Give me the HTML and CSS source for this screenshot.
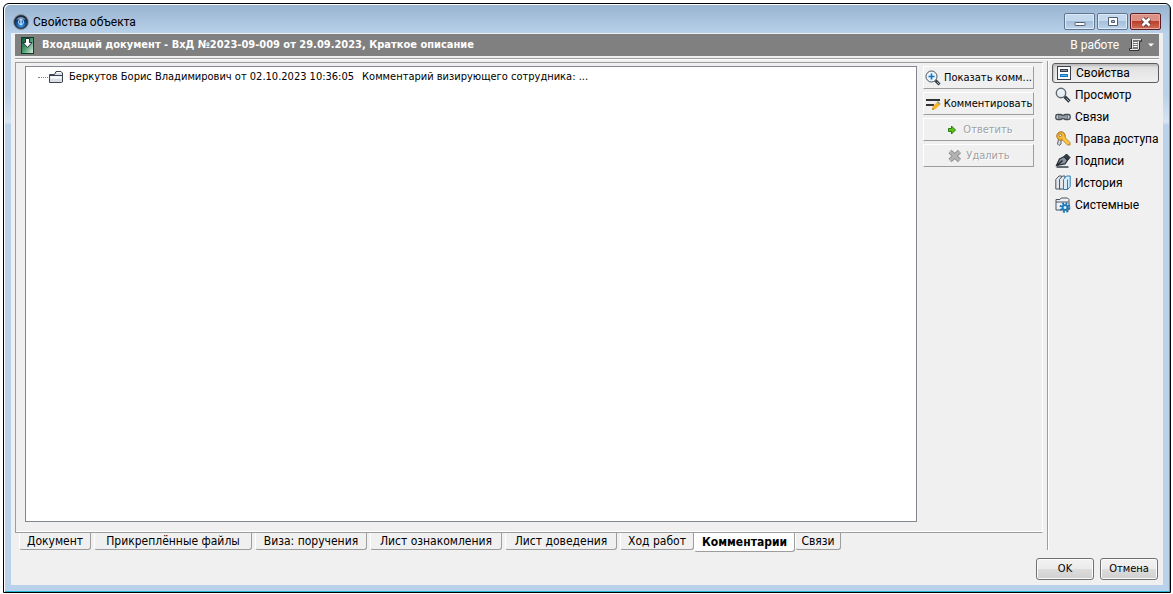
FILE: index.html
```html
<!DOCTYPE html>
<html lang="ru">
<head>
<meta charset="utf-8">
<title>Свойства объекта</title>
<link rel="stylesheet" href="styles.css">
</head>
<body>
<div class="window">
  <header class="titlebar">
    <svg class="app-icon" width="16" height="16" viewBox="0 0 16 16">
      <defs>
        <radialGradient id="orb" cx="50%" cy="75%" r="65%"><stop offset="0" stop-color="#4da0ee"/><stop offset=".6" stop-color="#12539b"/><stop offset="1" stop-color="#0b1f3e"/></radialGradient>
      </defs>
      <circle cx="8" cy="8" r="7.5" fill="#29323f" stroke="#8b98aa"/>
      <circle cx="8" cy="8" r="6" fill="url(#orb)"/>
      <path d="M3 5.500Q8 0 13 5.500" fill="#aebfd3" opacity=".7"/>
      <circle cx="8" cy="8" r="2.600" fill="none" stroke="#9fd0ff" stroke-width="1"/>
      <path d="M8 5v6" stroke="#e8f5ff" stroke-width="1.200"/>
    </svg>
    <h1 class="title">Свойства объекта</h1>
    <div class="controls">
      <button class="ctl" type="button" aria-label="Свернуть"><svg width="12" height="10" viewBox="0 0 12 10"><rect x="1" y="5.500" width="10" height="3" rx=".5" fill="#fff" stroke="#54606e"/></svg></button>
      <button class="ctl" type="button" aria-label="Развернуть"><svg width="12" height="10" viewBox="0 0 12 10"><path d="M1.500.5h9v8h-9zM4.500 3.500v2h3v-2z" fill="#fff" fill-rule="evenodd" stroke="#54606e"/></svg></button>
      <button class="ctl close" type="button" aria-label="Закрыть"><svg width="12" height="10" viewBox="0 0 12 10"><path d="M2.500 1.500l7 7M9.500 1.500l-7 7" stroke="#5b3a3c" stroke-width="4.500"/><path d="M2.500 1.500l7 7M9.500 1.500l-7 7" stroke="#fff" stroke-width="2.600"/></svg></button>
    </div>
  </header>
  <div class="client">
    <div class="docbar">
      <svg width="13" height="17" viewBox="0 0 13 17">
        <defs><linearGradient id="green" x1="0" y1="0" x2="1" y2="1"><stop offset="0" stop-color="#04552d"/><stop offset=".5" stop-color="#4c9c6c"/><stop offset="1" stop-color="#e6f3e9"/></linearGradient></defs>
        <rect x=".5" y=".5" width="12" height="16" fill="url(#green)" stroke="#0b3f24"/>
        <path d="M4.500 1.500h4v4h2.500L6.500 10.500 2 5.500h2.500z" fill="#fff" stroke="#222b4d"/>
      </svg>
      <h2 class="doc-title">Входящий документ - ВхД №2023-09-009 от 29.09.2023, Краткое описание</h2>
      <span class="state">В работе</span>
      <button class="state-menu" type="button" aria-label="Состояние">
        <svg width="26" height="14" viewBox="0 0 26 14">
          <path d="M3.500 1.500h10v2h-2v8q0 1-1.500 1H1.500v-2h2z" fill="#777" stroke="#2f343a"/>
          <path d="M4 1.500h9M4.500 2v8.500M2 11.500h8M10.500 3v8" stroke="#e8e8e8" fill="none"/>
          <path d="M5.500 4.500h4M5.500 6.500h4M5.500 8.500h4" stroke="#fff"/>
          <path d="M20 5.500h6l-3 3z" fill="#fff"/>
        </svg>
      </button>
    </div>
    <div class="main">
      <div class="left">
        <section class="page">
          <ul class="tree">
            <li class="node">
              <span class="branch"></span>
              <svg width="16" height="14" viewBox="0 0 16 14"><path d="M1.500 12V4.500h5l1.500-3h5l1.500 1.500v9l-1 .5h-12z" fill="#d9dfe5" stroke="#3b4450"/><path d="M1.500 5.500h12.500" stroke="#3b4450"/><path d="M2.500 6.500h11v2H2.500z" fill="#fff"/><path d="M9 2.500h4" stroke="#fff"/></svg>
              <span class="node-text">Беркутов Борис Владимирович от 02.10.2023 10:36:05</span>
              <span>Комментарий визирующего сотрудника: ...</span>
            </li>
          </ul>
          <div class="actions">
            <button class="action" type="button">
              <svg width="16" height="16" viewBox="0 0 16 16"><path d="M10 10l4.500 4.500" stroke="#333b44" stroke-width="3"/><path d="M12 12l2 2" stroke="#a9b3bb"/><circle cx="6.500" cy="6.500" r="5.500" fill="#eaf5fc" stroke="#4a545e"/><path d="M6.500 3.500v6M3.500 6.500h6" stroke="#1575c4" stroke-width="1.600"/></svg>
              Показать комм...</button>
            <button class="action" type="button">
              <svg width="16" height="14" viewBox="0 0 16 14"><path d="M1 3h14M1 8h8" stroke="#333" stroke-width="2"/><path d="M7 13l.8-3.500L12 5l3 3-4.500 4z" fill="#f9b529"/><path d="M12 5l1-1 2.500 2.700-.7 1.300z" fill="#8b8f96"/><path d="M7 13l.6-2.200 1.600 1.500z" fill="#a77a2b"/></svg>
              Комментировать</button>
            <button class="action" type="button" disabled>
              <svg width="16" height="12" viewBox="0 0 16 12"><path d="M4.500 4.500h3v-2.500l4 4-4 4V7.500h-3z" fill="#5cc117" stroke="#2d7b12"/></svg>
              Ответить</button>
            <button class="action" type="button" disabled>
              <svg width="16" height="14" viewBox="0 0 16 14"><path d="M3 2.500l9.500 9M12.500 2.500l-9.500 9" stroke="#929292" stroke-width="4.500"/><path d="M3 2.500l9.500 9M12.500 2.500l-9.500 9" stroke="#b4b4b4" stroke-width="2.500"/></svg>
              Удалить</button>
          </div>
        </section>
        <nav class="tabs">
          <button class="tab w72" type="button">Документ</button>
          <button class="tab w158" type="button">Прикреплённые файлы</button>
          <button class="tab w112" type="button">Виза: поручения</button>
          <button class="tab w132" type="button">Лист ознакомления</button>
          <button class="tab w112" type="button">Лист доведения</button>
          <button class="tab w74" type="button">Ход работ</button>
          <button class="tab active" type="button">Комментарии</button>
          <button class="tab last" type="button">Связи</button>
        </nav>
      </div>
      <nav class="side">
        <button class="item selected" type="button">
          <svg width="16" height="16" viewBox="0 0 16 16"><rect x="1.500" y="1.500" width="13" height="13" fill="#fafcfd" stroke="#39424c"/><rect x="4" y="4" width="8" height="3" fill="#333c46"/><path d="M5 5.500h6" stroke="#8d969e"/><rect x="4" y="9" width="8" height="3" fill="#1876bd"/><path d="M5 10.500h6" stroke="#58afe5"/></svg>
          Свойства</button>
        <button class="item" type="button">
          <svg width="16" height="16" viewBox="0 0 16 16"><path d="M9.500 9.500l5 5" stroke="#333b44" stroke-width="3.200"/><path d="M11.500 11.500l2.500 2.500" stroke="#a9b3bb"/><circle cx="6" cy="6" r="4.700" fill="#e6eef3" stroke="#5e6972" stroke-width="1.400"/><path d="M3.500 5q.8-2 3-2" stroke="#fff" fill="none"/></svg>
          Просмотр</button>
        <button class="item" type="button">
          <svg width="16" height="16" viewBox="0 0 16 16" fill="none"><rect x=".8" y="5.500" width="6.700" height="5" rx="1.800" fill="#c9d0d6" stroke="#444c55" stroke-width="1.300"/><rect x="8.500" y="5.500" width="6.700" height="5" rx="1.800" fill="#c9d0d6" stroke="#444c55" stroke-width="1.300"/><path d="M3 8h10" stroke="#444c55" stroke-width="2.800"/><path d="M3.500 8h9" stroke="#e5eaee"/></svg>
          Связи</button>
        <button class="item" type="button">
          <svg width="16" height="16" viewBox="0 0 16 16"><path d="M4 6L2.500 13l1.500 1.500 2-1.500V6z" fill="#d7dce1" stroke="#59616b"/><circle cx="6" cy="5" r="4.200" fill="#f7bb36" stroke="#a76d17"/><path d="M7 8.500l5.500 5.500h2.500v-2.500L9.500 6z" fill="#fbc642" stroke="#a76d17" stroke-width=".8"/><path d="M7.500 7.500l2-1.500" stroke="#fbc642" stroke-width="2"/><circle cx="5.200" cy="4.200" r="1.300" fill="#fff" stroke="#7c5217" stroke-width=".7"/></svg>
          Права доступа</button>
        <button class="item" type="button">
          <svg width="16" height="16" viewBox="0 0 16 16"><path d="M1.500 12.500L4.500 6l5-2.500 3 3.500-2.500 4z" fill="#8c959d" stroke="#2c343c" stroke-width="1.300"/><path d="M9 3.500l2.500-2.500L15 4.500 12.500 7.500z" fill="#343d46" stroke="#20272e"/><path d="M2 12.500l5.500-5" stroke="#20272e" stroke-width="1.500"/><path d="M1.500 14h12" stroke="#343d46" stroke-width="1.500"/></svg>
          Подписи</button>
        <button class="item" type="button">
          <svg width="16" height="16" viewBox="0 0 16 16" stroke-linejoin="round"><path d="M.8 4.500L4 1h2.500v13H.8z" fill="#e4e8ec" stroke="#4b5560"/><path d="M4.500 4.500L7.500 1H10v13H4.500z" fill="#e4e8ec" stroke="#4b5560"/><path d="M8.500 4.500L11.500 1h3.700v10.500L12.500 14.500h-4z" fill="#d7eefa" stroke="#2a7fb8"/><path d="M12.500 4.500v10" fill="none" stroke="#2a7fb8"/></svg>
          История</button>
        <button class="item" type="button">
          <svg width="16" height="16" viewBox="0 0 16 16"><path d="M1 13V2.500h4l1.200-1.500h6.300l1.500 1.500V13z" fill="#eef1f4" stroke="#4b5560"/><path d="M1 5h12.500" stroke="#4b5560"/><circle cx="10" cy="10.500" r="3.900" fill="none" stroke="#1f78b8" stroke-width="3" stroke-dasharray="1.700 1.363"/><circle cx="10" cy="10.500" r="2.400" fill="#dcf1fc" stroke="#1f78b8" stroke-width="1.800"/></svg>
          Системные</button>
      </nav>
    </div>
    <footer class="footer">
      <button class="btn" type="button">OK</button>
      <button class="btn" type="button">Отмена</button>
    </footer>
  </div>
</div>
</body>
</html>
```
FILE: styles.css
```css
* { box-sizing: border-box; }
body {
  margin: 0;
  min-height: 100vh;
  display: flex;
  padding: 3px 2px 1px 3px;
  background: #fff;
  color: #000;
  font: 11px/14px "DejaVu Sans Condensed", "DejaVu Sans", sans-serif;
}
button {
  margin: 0;
  padding: 0;
  border: 0;
  background: none;
  color: inherit;
  font: inherit;
  white-space: nowrap;
}
svg { display: block; flex: none; }
h1, h2, ul { margin: 0; padding: 0; font-size: inherit; font-weight: inherit; list-style: none; }

.window {
  flex: 1;
  display: flex;
  flex-direction: column;
  min-width: 0;
  padding: 0 6px 6px 6px;
  border: 1px solid #000;
  border-radius: 6px 6px 0 0;
  box-shadow: inset 1px 1px #fff, inset -1px -1px #27b7d4;
  background: linear-gradient(#98b3d0, #b9d1ea 30px, #b9d1ea 90px, #d7e4f3 118px, #b9d1ea 121px);
}
.titlebar {
  display: flex;
  align-items: center;
  height: 29px;
  padding: 6px 3px 0 3px;
}
.title {
  flex: 1;
  margin-left: 4px;
  font: 12px/16px Roboto, "Open Sans", sans-serif;
}
.controls { display: flex; gap: 2px; }
.ctl {
  display: flex;
  align-items: center;
  justify-content: center;
  width: 31px;
  height: 17px;
  border: 1px solid #5d7793;
  border-radius: 2px;
  box-shadow: inset 0 0 0 1px #dce9f6;
  background: linear-gradient(#c5d9ee 45%, #a5bfdb 50%, #bdd3ea);
}
.close {
  border-color: #5b1d24;
  box-shadow: inset 0 0 0 1px #e6aaa1;
  background: linear-gradient(#dc9186 45%, #bb3f2c 50%, #cf7059);
}

.client {
  flex: 1;
  display: flex;
  flex-direction: column;
  margin: 0 1px 1px;
  padding: 1px 4px 5px;
  background: #f0f0f0;
}
.docbar {
  display: flex;
  align-items: center;
  height: 22px;
  padding: 0 5px 0 6px;
  background: #808080;
  color: #fff;
}
.doc-title { flex: 1; margin-left: 8px; font-weight: bold; }
.state { font: 12px/16px Roboto, "Open Sans", sans-serif; }
.state-menu { margin-left: 9px; }

.main {
  flex: 1;
  display: flex;
  gap: 4px;
  margin-top: 2px;
  padding-top: 2px;
  border-top: 1px solid #9d9d9d;
  box-shadow: inset 0 1px #fff;
}
.left { flex: 1; display: flex; flex-direction: column; min-width: 0; padding-top: 1px; }
.page {
  flex: 1;
  display: flex;
  gap: 6px;
  padding: 3px 8px 10px 9px;
  border: 1px solid #9d9d9d;
  border-right-color: #fff;
  box-shadow: inset 0 -1px #fff;
}
.tree {
  flex: 1;
  min-width: 0;
  padding: 3px 12px;
  border: 1px solid #828790;
  background: #fff;
}
.node { display: flex; align-items: center; height: 14px; white-space: nowrap; }
.branch { width: 10px; border-top: 1px dotted #808080; }
.node-text { margin: 0 8px 0 5px; }
.actions { display: flex; flex-direction: column; gap: 3px; width: 111px; }
.action {
  display: flex;
  align-items: center;
  justify-content: center;
  gap: 3px;
  height: 23px;
  border: 1px solid #fff;
  border-right-color: #9d9d9d;
  border-bottom-color: #9d9d9d;
}
.action:disabled { color: #a0a0a0; text-shadow: 1px 1px #fff; }

.tabs { display: flex; align-items: flex-start; gap: 3px; height: 25px; padding-left: 4px; }
.tab {
  height: 17px;
  border: 1px solid #9d9d9d;
  border-top: 0;
  border-left-color: #fff;
  border-radius: 0 0 3px 3px;
  font-size: 12px;
  line-height: 16px;
}
.w72 { width: 72px; }
.w158 { width: 158px; }
.w112 { width: 112px; }
.w132 { width: 132px; }
.w74 { width: 74px; }
.active {
  width: 101px;
  height: 19px;
  margin: 0 -3px;
  background: #fff;
  font-weight: bold;
  line-height: 18px;
}
.last { width: 46px; }

.side {
  display: flex;
  flex-direction: column;
  gap: 2px;
  width: 112px;
  margin-bottom: 8px;
  padding-left: 4px;
  padding-top: 1px;
  border-left: 1px solid #9d9d9d;
  box-shadow: inset 1px 0 #fff;
}
.item {
  display: flex;
  align-items: center;
  gap: 4px;
  height: 20px;
  padding: 0 3px;
  font: 12px/16px Roboto, "Open Sans", sans-serif;
}
.item.selected {
  margin-top: 1px;
  border: 1px solid #5c5c5c;
  border-radius: 3px;
  box-shadow: inset 1px 2px 2px #bcbcbc;
  background: linear-gradient(#dedede, #efefef);
}
.footer { display: flex; justify-content: flex-end; gap: 6px; padding: 0 1px 0 0; }
.btn {
  width: 58px;
  height: 22px;
  border: 1px solid #707070;
  border-radius: 3px;
  box-shadow: inset 0 0 0 1px #fcfcfc;
  background: linear-gradient(#f2f2f2, #ebebeb 49%, #dddddd 50%, #cfcfcf);
}
```
